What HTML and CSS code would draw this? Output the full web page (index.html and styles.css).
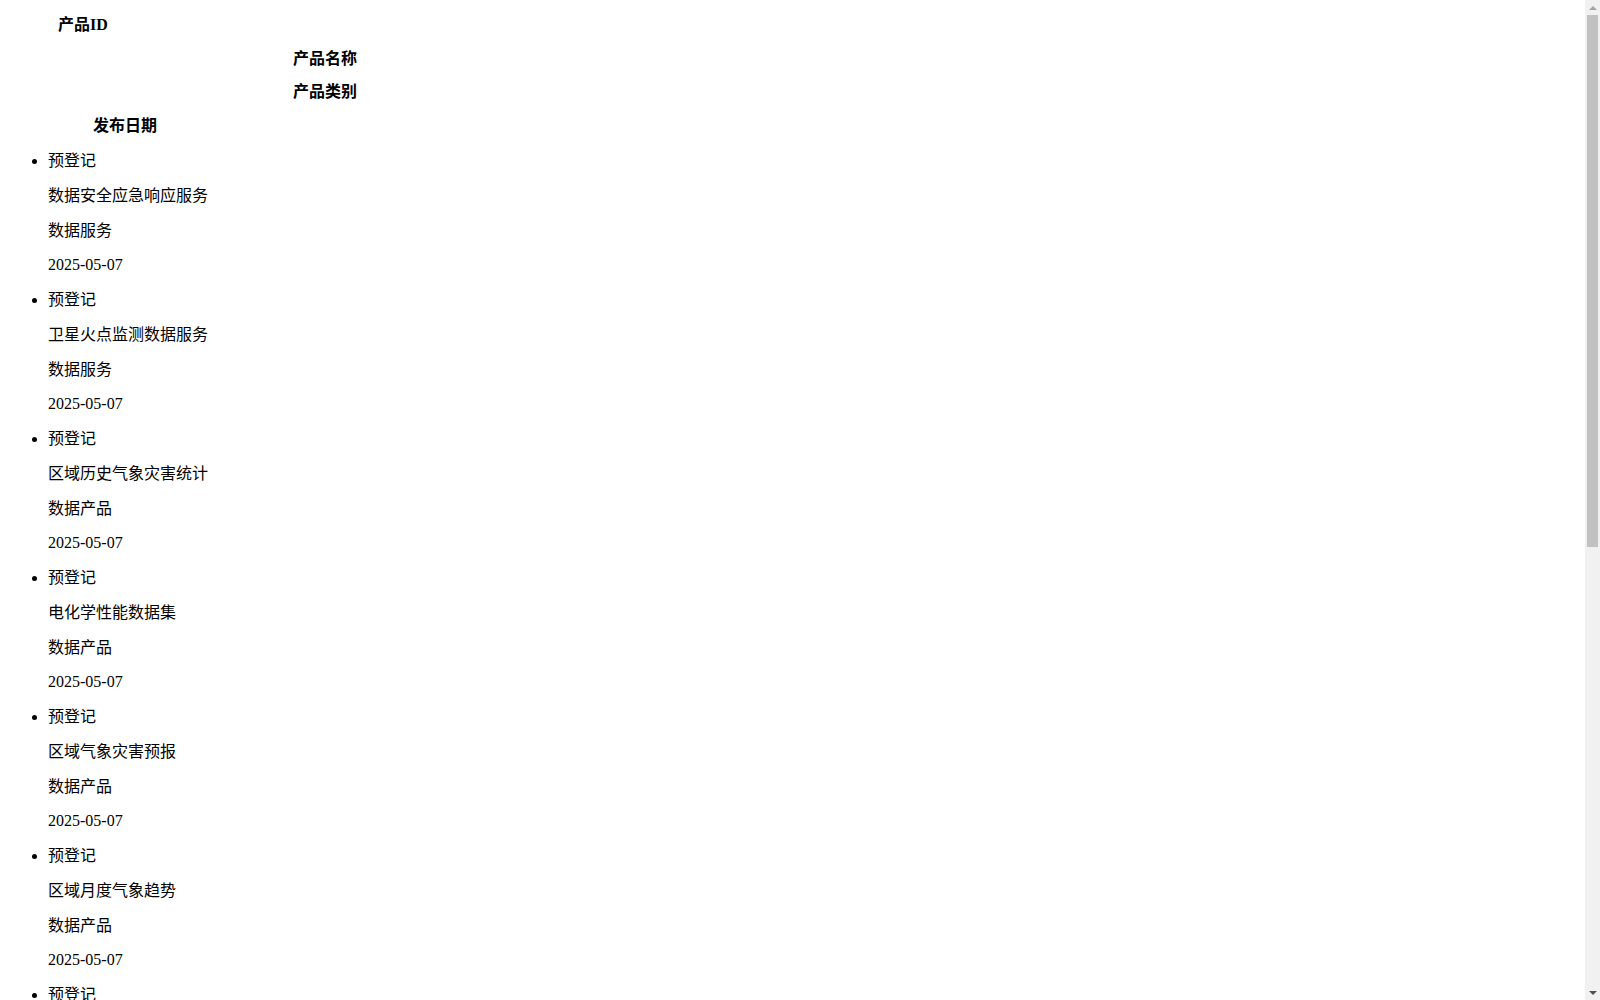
FILE: index.html
```html
<!DOCTYPE html>
<html lang="zh-CN">
<head>
<meta charset="utf-8">
<title>产品列表</title>
<link rel="stylesheet" href="styles.css">
</head>
<body>
<div class="list-head">
  <p class="col col-id">产品ID</p>
  <p class="col col-name">产品名称</p>
  <p class="col col-type">产品类别</p>
  <p class="col col-date">发布日期</p>
</div>
<ul class="list">
  <li class="item"><p class="cell">预登记</p><p class="cell">数据安全应急响应服务</p><p class="cell">数据服务</p><p class="cell date">2025-05-07</p></li>
  <li class="item"><p class="cell">预登记</p><p class="cell">卫星火点监测数据服务</p><p class="cell">数据服务</p><p class="cell date">2025-05-07</p></li>
  <li class="item"><p class="cell">预登记</p><p class="cell">区域历史气象灾害统计</p><p class="cell">数据产品</p><p class="cell date">2025-05-07</p></li>
  <li class="item"><p class="cell">预登记</p><p class="cell">电化学性能数据集</p><p class="cell">数据产品</p><p class="cell date">2025-05-07</p></li>
  <li class="item"><p class="cell">预登记</p><p class="cell">区域气象灾害预报</p><p class="cell">数据产品</p><p class="cell date">2025-05-07</p></li>
  <li class="item"><p class="cell">预登记</p><p class="cell">区域月度气象趋势</p><p class="cell">数据产品</p><p class="cell date">2025-05-07</p></li>
  <li class="item"><p class="cell">预登记</p><p class="cell">农业气象灾害评估</p><p class="cell">数据产品</p><p class="cell date">2025-05-06</p></li>
  <li class="item"><p class="cell">预登记</p><p class="cell">城市交通流量数据集</p><p class="cell">数据产品</p><p class="cell date">2025-05-06</p></li>
  <li class="item"><p class="cell">预登记</p><p class="cell">企业信用评估服务</p><p class="cell">数据服务</p><p class="cell date">2025-05-06</p></li>
  <li class="item"><p class="cell">预登记</p><p class="cell">遥感影像解译服务</p><p class="cell">数据服务</p><p class="cell date">2025-05-06</p></li>
  <li class="item"><p class="cell">预登记</p><p class="cell">新能源电池循环数据集</p><p class="cell">数据产品</p><p class="cell date">2025-05-06</p></li>
  <li class="item"><p class="cell">预登记</p><p class="cell">港口物流运行统计</p><p class="cell">数据产品</p><p class="cell date">2025-05-06</p></li>
</ul>
<div class="scrollbar" aria-hidden="true">
  <div class="sb-btn"><span class="sb-arrow sb-up"></span></div>
  <div class="sb-track"><div class="sb-thumb"></div></div>
  <div class="sb-btn"><span class="sb-arrow sb-down"></span></div>
</div>
</body>
</html>
```

FILE: styles.css
```css
html {
  background: #fff;
}

body {
  margin: 0 8px 8px 8px;
  font-family: "Liberation Serif", "Noto Sans CJK SC", serif;
  font-size: 16px;
  color: #000;
  background: #fff;
}

.list-head {
  display: block;
}

.col {
  margin: 16px 0;
  font-weight: bold;
  line-height: 17.67px;
}

.col-id { padding-left: 50px; }
.col-name { padding-left: 285px; }
.col-type { padding-left: 285px; }
.col-date { padding-left: 85px; }

.list {
  margin: 17.5px 0 16px 0;
  padding-left: 40px;
  list-style: disc;
}

.cell {
  margin: 16px 0;
  line-height: 18.75px;
}

/* decorative scrollbar overlay matching the reference window chrome */
.scrollbar {
  position: fixed;
  top: 0;
  right: 0;
  width: 15px;
  height: 100vh;
  background: #f1f1f1;
  display: flex;
  flex-direction: column;
}

.sb-btn {
  height: 15px;
  flex: 0 0 15px;
  display: flex;
  align-items: center;
  justify-content: center;
}

.sb-arrow {
  width: 0;
  height: 0;
  border-left: 4px solid transparent;
  border-right: 4px solid transparent;
}

.sb-up {
  border-bottom: 4px solid #a3a3a3;
}

.sb-down {
  border-top: 4px solid #505050;
}

.sb-track {
  flex: 1;
  padding: 0 2px;
}

.sb-thumb {
  height: 532px;
  background: #c1c1c1;
}
```
